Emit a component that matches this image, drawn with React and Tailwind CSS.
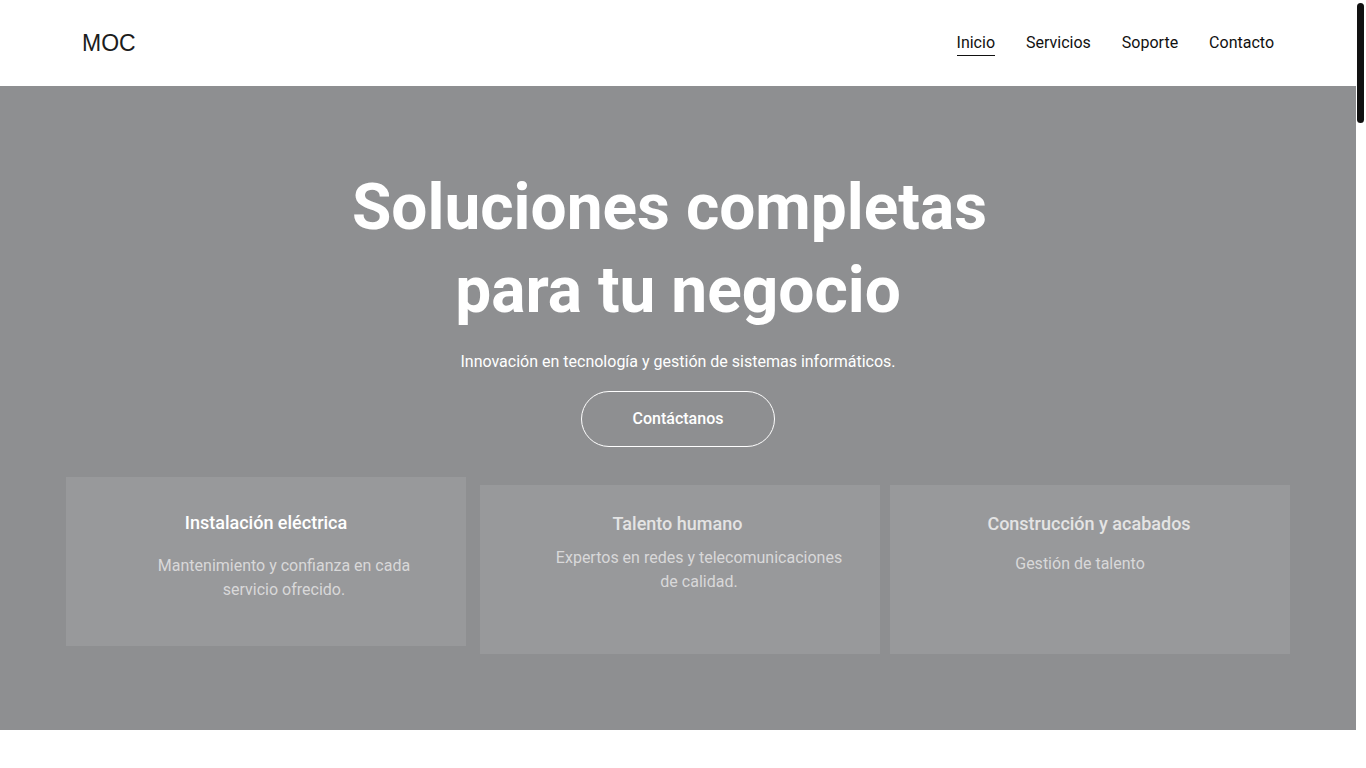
import React from 'react';

const cards = [
  {
    title: 'Instalación eléctrica',
    text: 'Mantenimiento y confianza en cada servicio ofrecido.',
    wrap: 'mt-0 ml-0',
    titleCls: 'pt-[32px] text-white',
    textCls: 'mt-[17px] ml-[36px]',
  },
  {
    title: 'Talento humano',
    text: 'Expertos en redes y telecomunicaciones de calidad.',
    wrap: 'mt-[8px] ml-[14px]',
    titleCls: 'pt-[25px] text-[#e4e4e4] -ml-[5px]',
    textCls: 'mt-[8px] ml-[38px]',
  },
  {
    title: 'Construcción y acabados',
    text: 'Gestión de talento',
    wrap: 'mt-[8px] ml-[10px]',
    titleCls: 'pt-[25px] text-[#e4e4e4] -ml-[2px]',
    textCls: 'mt-[14px] -ml-[20px]',
  },
];

const navItems = ['Inicio', 'Servicios', 'Soporte', 'Contacto'];

const App = () => {
  return (
    <div className="flex bg-white" style={{ fontFamily: 'Roboto, "Liberation Sans", sans-serif' }}>
      <div className="flex-1 min-w-0">
        <header className="h-[86px] flex items-center justify-between px-[82px] bg-white">
          <a className="text-[23px] text-[#1c1c1c] leading-none" style={{ fontFamily: '"Liberation Sans", Arial, sans-serif' }}>
            MOC
          </a>
          <nav className="flex items-center gap-[31px] text-[16px] text-[#111]">
            {navItems.map((item, i) => (
              <a key={item} className={i === 0 ? 'border-b border-[#111] leading-[24px]' : 'leading-[24px]'}>
                {item}
              </a>
            ))}
          </nav>
        </header>

        <section className="bg-[#8e8f91] h-[644px] pt-[80px] flex flex-col items-center">
          <h1 className="text-white text-[64px] font-bold leading-[83px] text-center">
            <span className="block -ml-[17px]">Soluciones completas</span>
            <span className="block">para tu negocio</span>
          </h1>
          <p className="mt-[18px] text-white text-[16px] leading-[24px]">
            Innovación en tecnología y gestión de sistemas informáticos.
          </p>
          <button className="mt-[17px] w-[194px] h-[56px] rounded-full border border-white text-white text-[16px] font-medium">
            Contáctanos
          </button>

          <div className="mt-[30px] self-start ml-[66px] flex items-start">
            {cards.map((c) => (
              <div key={c.title} className={`w-[400px] h-[169px] bg-[#98999b] flex flex-col items-center ${c.wrap}`}>
                <h3 className={`text-[18px] font-medium leading-[28px] ${c.titleCls}`}>{c.title}</h3>
                <p className={`w-[290px] text-center text-[16px] leading-[24px] text-[#d8d8d9] ${c.textCls}`}>{c.text}</p>
              </div>
            ))}
          </div>
        </section>

        <div className="h-[38px] bg-white"></div>
      </div>

      {/* page scrollbar */}
      <aside className="w-[10px] shrink-0 bg-white pt-[3px]">
        <div className="ml-[1px] w-[7px] h-[120px] rounded-full bg-[#111]"></div>
      </aside>
    </div>
  );
};

export default App;
